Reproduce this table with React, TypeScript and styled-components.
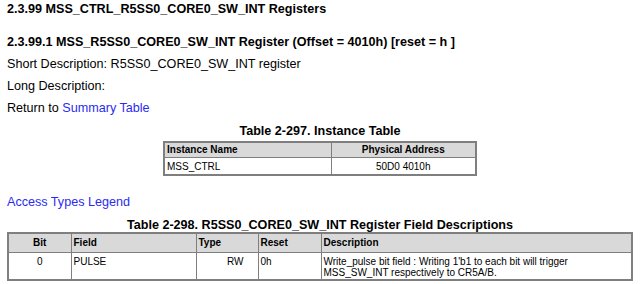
import React from 'react';
import styled, { createGlobalStyle } from 'styled-components';

const GlobalStyle = createGlobalStyle`
  body {
    margin: 0;
    background: #ffffff;
    font-family: "Liberation Sans", Arial, sans-serif;
    color: #000000;
  }
`;

const Page = styled.div`
  padding: 2px 7px 0 7px;
  width: 640px;
  box-sizing: border-box;
`;

const Heading = styled.div<{ $gap: number }>`
  font-weight: bold;
  font-size: 12.6px;
  line-height: 15px;
  margin-bottom: ${p => p.$gap}px;
`;

const Line = styled.div<{ $top?: number; $gap?: number }>`
  font-size: 12.6px;
  line-height: 15px;
  margin-top: ${p => p.$top || 0}px;
  margin-bottom: ${p => p.$gap ?? 7}px;
`;

const Link = styled.a`
  color: #2b2bf0;
  text-decoration: none;
`;

const Caption = styled.div<{ $gap: number }>`
  font-weight: bold;
  font-size: 12.6px;
  line-height: 15px;
  text-align: center;
  margin-bottom: ${p => p.$gap}px;
`;

const Table = styled.table<{ $width: number; $left: number }>`
  border-collapse: collapse;
  table-layout: fixed;
  width: ${p => p.$width}px;
  margin-left: ${p => p.$left}px;
  font-size: 10px;
  border: 2px solid #7f7f7f;
`;

const Row = styled.tr<{ $h: number }>`
  height: ${p => p.$h}px;
`;

const Th = styled.th<{ $align?: string }>`
  background: #d9d9d9;
  border: 1px solid #7f7f7f;
  text-align: ${p => p.$align || 'left'};
  padding: 0 2px;
  line-height: 12px;
  vertical-align: middle;
`;

const Td = styled.td<{ $align?: string; $pr?: number }>`
  border: 1px solid #7f7f7f;
  text-align: ${p => p.$align || 'left'};
  vertical-align: top;
  padding: 3px ${p => p.$pr ?? 2}px 0 2px;
  line-height: 11.5px;
`;

export default function App() {
  return (
    <Page>
      <GlobalStyle />
      <Heading $gap={18}>2.3.99 MSS_CTRL_R5SS0_CORE0_SW_INT Registers</Heading>
      <Heading $gap={7}>2.3.99.1 MSS_R5SS0_CORE0_SW_INT Register (Offset = 4010h) [reset = h ]</Heading>
      <Line>Short Description: R5SS0_CORE0_SW_INT register</Line>
      <Line>Long Description:</Line>
      <Line $gap={8}>
        Return to <Link href="#">Summary Table</Link>
      </Line>
      <Caption $gap={2}>Table 2-297. Instance Table</Caption>
      <Table $width={314} $left={156}>
        <colgroup>
          <col style={{ width: 167 }} />
          <col />
        </colgroup>
        <thead>
          <Row $h={15}>
            <Th>Instance Name</Th>
            <Th $align="center">Physical Address</Th>
          </Row>
        </thead>
        <tbody>
          <Row $h={18}>
            <Td>MSS_CTRL</Td>
            <Td $align="center">50D0 4010h</Td>
          </Row>
        </tbody>
      </Table>
      <Line $top={19} $gap={8}>
        <Link href="#">Access Types Legend</Link>
      </Line>
      <Caption $gap={-1}>Table 2-298. R5SS0_CORE0_SW_INT Register Field Descriptions</Caption>
      <Table $width={626} $left={0}>
        <colgroup>
          <col style={{ width: 63 }} />
          <col style={{ width: 125 }} />
          <col style={{ width: 62 }} />
          <col style={{ width: 63 }} />
          <col />
        </colgroup>
        <thead>
          <Row $h={19}>
            <Th $align="center">Bit</Th>
            <Th>Field</Th>
            <Th>Type</Th>
            <Th>Reset</Th>
            <Th>Description</Th>
          </Row>
        </thead>
        <tbody>
          <Row $h={27}>
            <Td $align="center">0</Td>
            <Td>PULSE</Td>
            <Td $align="right" $pr={14}>RW</Td>
            <Td>0h</Td>
            <Td>
              Write_pulse bit field : Writing 1'b1 to each bit will trigger
              <br />
              MSS_SW_INT respectively to CR5A/B.
            </Td>
          </Row>
        </tbody>
      </Table>
    </Page>
  );
}
